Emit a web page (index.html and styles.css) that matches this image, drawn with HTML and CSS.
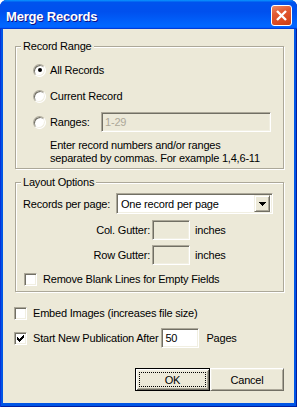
FILE: index.html
```html
<!DOCTYPE html>
<html lang="en">
<head>
    <meta charset="UTF-8">
    <meta name="viewport" content="width=device-width, initial-scale=1.0">
    <title>Merge Records</title>
    <link rel="stylesheet" href="styles.css">
</head>
<body>
    <div class="window">
        <div class="title-bar">
            <span class="title">Merge Records</span>
            <span class="close-btn">
                <svg width="19" height="19" viewBox="0 0 19 19">
                    <path d="M5 5 L14 14 M14 5 L5 14" stroke="#fff" stroke-width="2.4" fill="none"/>
                </svg>
            </span>
        </div>
        <div class="client">
            <div class="group range-group">
                <div class="group-title">Record Range</div>
                <div class="radio-row first-row"><span class="radio checked"></span><span class="radio-text">All Records</span></div>
                <div class="radio-row"><span class="radio"></span><span class="radio-text">Current Record</span></div>
                <div class="radio-row">
                    <span class="radio"></span><span class="radio-text ranges-label">Ranges:</span>
                    <span class="edit disabled ranges-edit">1-29</span>
                </div>
                <p class="hint">Enter record numbers and/or ranges<br>separated by commas. For example 1,4,6-11</p>
            </div>

            <div class="group layout-group">
                <div class="group-title">Layout Options</div>
                <div class="per-page-row">
                    <span>Records per page:</span>
                    <div class="combo">
                        <span class="combo-text">One record per page</span>
                        <span class="combo-btn">
                            <svg width="7" height="4" viewBox="0 0 7 4" shape-rendering="crispEdges">
                                <path d="M0 0h7v1h-7z M1 1h5v1h-5z M2 2h3v1h-3z M3 3h1v1h-1z" fill="#000"/>
                            </svg>
                        </span>
                    </div>
                </div>
                <div class="gutter-row col-row">
                    <span class="gutter-label">Col. Gutter:</span>
                    <span class="edit disabled gutter-edit"></span>
                    <span class="unit">inches</span>
                </div>
                <div class="gutter-row row-row">
                    <span class="gutter-label">Row Gutter:</span>
                    <span class="edit disabled gutter-edit"></span>
                    <span class="unit">inches</span>
                </div>
                <div class="check-row blank-row">
                    <span class="check"></span>
                    <span class="check-text">Remove Blank Lines for Empty Fields</span>
                </div>
            </div>

            <div class="check-row outer-row embed-row">
                <span class="check"></span>
                <span class="check-text">Embed Images (increases file size)</span>
            </div>
            <div class="check-row outer-row start-row">
                <span class="check checked">
                    <svg width="7" height="7" viewBox="0 0 7 7" shape-rendering="crispEdges">
                        <path d="M0 2h1v3h-1z M1 3h1v3h-1z M2 4h1v3h-1z M3 3h1v3h-1z M4 2h1v3h-1z M5 1h1v3h-1z M6 0h1v3h-1z" fill="#000"/>
                    </svg>
                </span>
                <span class="check-text">Start New Publication After</span>
                <span class="edit pages-edit">50</span>
                <span class="unit pages-unit">Pages</span>
            </div>

            <div class="buttons">
                <button class="btn default"><span class="focus">OK</span></button>
                <button class="btn">Cancel</button>
            </div>
        </div>
    </div>
</body>
</html>
```

FILE: styles.css
```css
body {
    margin: 0;
    background: #ffffff;
    font-family: "Liberation Sans", Arial, sans-serif;
    font-size: 11px;
    letter-spacing: -0.2px;
    color: #000;
}

.window {
    width: 297px;
    height: 407px;
    display: flex;
    flex-direction: column;
    background: #0055e5;
    border-radius: 7px 7px 0 0;
    overflow: hidden;
    box-shadow: inset 1px 0 #0831d9, inset -1px 0 #001ea0, inset 0 -1px #001ea0;
}

.title-bar {
    height: 29px;
    flex: none;
    box-sizing: border-box;
    display: flex;
    align-items: center;
    justify-content: space-between;
    padding: 2px 5px 0 6px;
    background: linear-gradient(180deg, #0997ff, #0053ee 8%, #0050ee 40%, #0066ff 88%, #0066ff 93%, #005bff 95%, #003dd7 96%, #003dd7);
}

.title {
    color: #fff;
    font-weight: bold;
    font-size: 13px;
    letter-spacing: -0.2px;
    padding-top: 2px;
    text-shadow: 1px 1px #0f1089;
}

.close-btn {
    width: 21px;
    height: 21px;
    box-sizing: border-box;
    border: 1px solid #fff;
    border-radius: 3px;
    background: linear-gradient(160deg, #eb8b66 0%, #e25b34 35%, #d9491f 75%, #c63d14 100%);
    display: flex;
    align-items: center;
    justify-content: center;
}

.client {
    flex: 1;
    margin: 0 3px 4px;
    background: #ece9d8;
    padding: 17px 10px 0 12px;
    display: flex;
    flex-direction: column;
}

/* group boxes */
.group {
    border: 1px solid #aca899;
    box-shadow: inset 1px 1px #fff, 1px 1px #fff;
}

.group-title {
    display: table;
    margin-top: -7px;
    padding: 0 2px;
    line-height: 13px;
    background: #ece9d8;
}

.range-group {
    padding: 0 0 3px 17px;
}

.range-group .group-title {
    margin-left: -12px;
}

.layout-group {
    margin-top: 13px;
    padding: 0 10px 5px 7px;
}

.layout-group .group-title {
    margin-left: -2px;
}

/* radio rows */
.radio-row {
    height: 26px;
    display: flex;
    align-items: center;
}

.first-row {
    margin-top: 4px;
}

.radio {
    width: 13px;
    height: 13px;
    box-sizing: border-box;
    border-radius: 50%;
    border: 1px solid;
    border-color: #aca899 #fff #fff #aca899;
    box-shadow: inset 1px 1px #716f64, inset -1px -1px #f1efe2;
    background: #fff;
    display: flex;
    align-items: center;
    justify-content: center;
}

.radio.checked::after {
    content: "";
    width: 4px;
    height: 4px;
    border-radius: 50%;
    background: #000;
}

.radio-text {
    margin-left: 4px;
    line-height: 13px;
}

.ranges-label {
    width: 51px;
}

.edit {
    height: 20px;
    box-sizing: border-box;
    border: 1px solid;
    border-color: #aca899 #fff #fff #aca899;
    box-shadow: inset 1px 1px #716f64, inset -1px -1px #f1efe2;
    background: #fff;
    padding: 0 3px;
    line-height: 18px;
}

.edit.disabled {
    background: #ece9d8;
    color: #aca899;
}

.ranges-edit {
    width: 170px;
}

.hint {
    margin: 4px 0 0 17px;
    line-height: 13px;
}

/* layout options */
.per-page-row {
    height: 21px;
    margin-top: 4px;
    display: flex;
    align-items: center;
    justify-content: space-between;
}

.combo {
    width: 157px;
    height: 21px;
    box-sizing: border-box;
    border: 1px solid;
    border-color: #aca899 #fff #fff #aca899;
    box-shadow: inset 1px 1px #716f64, inset -1px -1px #f1efe2;
    background: #fff;
    padding: 2px;
    display: flex;
    align-items: center;
}

.combo-text {
    flex: 1;
    padding-left: 2px;
}

.combo-btn {
    width: 16px;
    height: 17px;
    box-sizing: border-box;
    border: 1px solid;
    border-color: #f1efe2 #716f64 #716f64 #f1efe2;
    box-shadow: inset 1px 1px #fff, inset -1px -1px #aca899;
    background: #ece9d8;
    display: flex;
    align-items: center;
    justify-content: center;
}

.gutter-row {
    height: 20px;
    display: flex;
    align-items: center;
}

.col-row {
    margin-top: 6px;
}

.row-row {
    margin-top: 5px;
}

.gutter-label {
    width: 127px;
    text-align: right;
}

.gutter-edit {
    width: 38px;
    margin-left: 2px;
}

.unit {
    margin-left: 5px;
}

/* check boxes */
.check-row {
    display: flex;
    align-items: center;
    line-height: 13px;
}

.check {
    width: 13px;
    height: 13px;
    flex: none;
    box-sizing: border-box;
    border: 1px solid;
    border-color: #aca899 #fff #fff #aca899;
    box-shadow: inset 1px 1px #716f64, inset -1px -1px #f1efe2;
    background: #fff;
    display: flex;
    align-items: center;
    justify-content: center;
}

.check-text {
    margin-left: 6px;
}

.blank-row {
    margin: 8px 0 0 1px;
}

.outer-row {
    margin-left: -1px;
}

.embed-row {
    margin-top: 15px;
}

.start-row {
    margin-top: 8px;
    height: 20px;
}

.pages-edit {
    width: 38px;
    margin-left: 3px;
}

.pages-unit {
    margin-left: 7px;
}

/* buttons */
.buttons {
    margin-top: 20px;
    display: flex;
    justify-content: flex-end;
}

.btn {
    width: 74px;
    height: 23px;
    box-sizing: border-box;
    border: 1px solid;
    border-color: #fff #716f64 #716f64 #fff;
    box-shadow: inset 1px 1px #f1efe2, inset -1px -1px #aca899;
    background: #ece9d8;
    font-family: inherit;
    font-size: 11px;
    letter-spacing: -0.2px;
    color: #000;
    padding: 0;
}

.btn.default {
    width: 75px;
    border-color: #000;
    box-shadow: inset 1px 1px #fff, inset -1px -1px #716f64, inset 2px 2px #f1efe2, inset -2px -2px #aca899;
    padding: 3px;
    display: flex;
}

.focus {
    flex: 1;
    border: 1px dotted #000;
    display: flex;
    align-items: center;
    justify-content: center;
}
```
